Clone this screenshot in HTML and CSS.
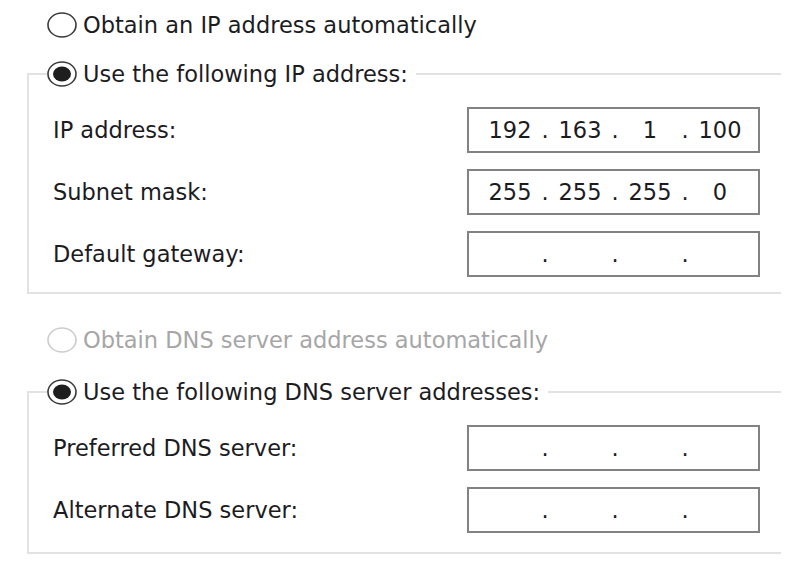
FILE: index.html
```html
<!DOCTYPE html>
<html>
<head>
<meta charset="utf-8">
<link rel="stylesheet" href="styles.css">
</head>
<body>
<div class="dialog">
  <div class="radio-row top-row">
    <svg class="radio" viewBox="0 0 30 26" width="30" height="26"><ellipse cx="15" cy="13" rx="14" ry="12" class="ring"/></svg>
    <span>Obtain an IP address automatically</span>
  </div>
  <fieldset class="group group-ip">
    <legend class="radio-row legend">
      <svg class="radio" viewBox="0 0 30 26" width="30" height="26"><ellipse cx="15" cy="13" rx="14" ry="12" class="ring"/><ellipse cx="15" cy="13" rx="9" ry="7.5" class="pip"/></svg>
      <span>Use the following IP address:</span>
    </legend>
    <div class="field-row">
      <span class="field-label">IP address:</span>
      <div class="ip-box"><span class="octet">192</span><span class="dot">.</span><span class="octet">163</span><span class="dot">.</span><span class="octet">1</span><span class="dot">.</span><span class="octet">100</span></div>
    </div>
    <div class="field-row">
      <span class="field-label">Subnet mask:</span>
      <div class="ip-box"><span class="octet">255</span><span class="dot">.</span><span class="octet">255</span><span class="dot">.</span><span class="octet">255</span><span class="dot">.</span><span class="octet">0</span></div>
    </div>
    <div class="field-row">
      <span class="field-label">Default gateway:</span>
      <div class="ip-box"><span class="octet"></span><span class="dot">.</span><span class="octet"></span><span class="dot">.</span><span class="octet"></span><span class="dot">.</span><span class="octet"></span></div>
    </div>
  </fieldset>
  <div class="radio-row top-row disabled dns-auto">
    <svg class="radio" viewBox="0 0 30 26" width="30" height="26"><ellipse cx="15" cy="13" rx="14" ry="12" class="ring"/></svg>
    <span>Obtain DNS server address automatically</span>
  </div>
  <fieldset class="group group-dns">
    <legend class="radio-row legend">
      <svg class="radio" viewBox="0 0 30 26" width="30" height="26"><ellipse cx="15" cy="13" rx="14" ry="12" class="ring"/><ellipse cx="15" cy="13" rx="9" ry="7.5" class="pip"/></svg>
      <span>Use the following DNS server addresses:</span>
    </legend>
    <div class="field-row">
      <span class="field-label">Preferred DNS server:</span>
      <div class="ip-box"><span class="octet"></span><span class="dot">.</span><span class="octet"></span><span class="dot">.</span><span class="octet"></span><span class="dot">.</span><span class="octet"></span></div>
    </div>
    <div class="field-row">
      <span class="field-label">Alternate DNS server:</span>
      <div class="ip-box"><span class="octet"></span><span class="dot">.</span><span class="octet"></span><span class="dot">.</span><span class="octet"></span><span class="dot">.</span><span class="octet"></span></div>
    </div>
  </fieldset>
</div>
</body>
</html>
```
FILE: styles.css
```css
body {
  margin: 0;
  background: #ffffff;
  font-family: "DejaVu Sans", "Verdana", sans-serif;
  font-size: 22.5px;
  color: #1c1c1f;
}

.dialog {
  display: flex;
  flex-direction: column;
  padding-top: 12px;
}

.radio-row {
  display: flex;
  align-items: center;
  gap: 6px;
  height: 26px;
  line-height: 26px;
  white-space: nowrap;
}

.top-row {
  margin-left: 47px;
}

.radio {
  display: block;
  flex: none;
}

.radio .ring {
  fill: #ffffff;
  stroke: #3a3a3a;
  stroke-width: 1.6;
}

.radio .pip {
  fill: #1e1e1e;
}

.disabled {
  color: #a6a6a6;
}

.disabled .radio .ring {
  stroke: #cccccc;
}

.group {
  margin: 23px 0 0 27px;
  width: 754px;
  box-sizing: border-box;
  border: 2px solid #e2e2e2;
  border-right: none;
  padding: 20px 21px 15px 18px;
  display: flex;
  flex-direction: column;
  gap: 16px;
  min-width: 0;
}

.legend {
  padding: 0 8px 0 0;
}

.dns-auto {
  margin-top: 33px;
}

.group-dns {
  margin-top: 26px;
  padding-bottom: 19px;
}

.field-row {
  display: flex;
  align-items: center;
  justify-content: space-between;
}

.field-label {
  padding-left: 6px;
}

.ip-box {
  width: 293px;
  height: 46px;
  box-sizing: border-box;
  border: 2px solid #828282;
  display: flex;
  align-items: center;
  padding-left: 13px;
}

.octet {
  width: 56px;
  text-align: center;
}

.dot {
  width: 14px;
  text-align: center;
}
```
